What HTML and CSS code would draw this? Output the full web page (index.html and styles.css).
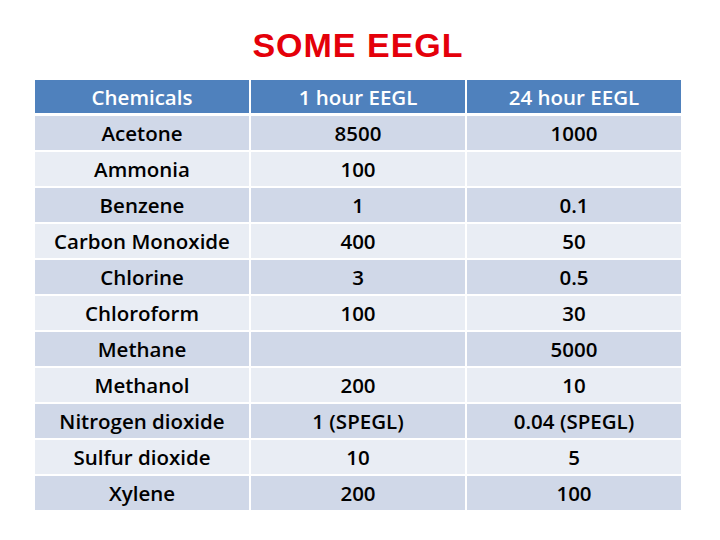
FILE: index.html
```html
<!DOCTYPE html>
<html>
<head>
<meta charset="utf-8">
<link rel="stylesheet" href="styles.css">
</head>
<body>
<div class="page">
  <h1 class="title">SOME EEGL</h1>
  <div class="table">
    <div class="row head"><div class="cell">Chemicals</div><div class="cell">1 hour EEGL</div><div class="cell">24 hour EEGL</div></div>
    <div class="row odd"><div class="cell">Acetone</div><div class="cell">8500</div><div class="cell">1000</div></div>
    <div class="row even"><div class="cell">Ammonia</div><div class="cell">100</div><div class="cell"></div></div>
    <div class="row odd"><div class="cell">Benzene</div><div class="cell">1</div><div class="cell">0.1</div></div>
    <div class="row even"><div class="cell">Carbon Monoxide</div><div class="cell">400</div><div class="cell">50</div></div>
    <div class="row odd"><div class="cell">Chlorine</div><div class="cell">3</div><div class="cell">0.5</div></div>
    <div class="row even"><div class="cell">Chloroform</div><div class="cell">100</div><div class="cell">30</div></div>
    <div class="row odd"><div class="cell">Methane</div><div class="cell"></div><div class="cell">5000</div></div>
    <div class="row even"><div class="cell">Methanol</div><div class="cell">200</div><div class="cell">10</div></div>
    <div class="row odd"><div class="cell">Nitrogen dioxide</div><div class="cell">1 (SPEGL)</div><div class="cell">0.04 (SPEGL)</div></div>
    <div class="row even"><div class="cell">Sulfur dioxide</div><div class="cell">10</div><div class="cell">5</div></div>
    <div class="row odd"><div class="cell">Xylene</div><div class="cell">200</div><div class="cell">100</div></div>
  </div>
</div>
</body>
</html>
```
FILE: styles.css
```css
html, body {
  margin: 0;
  padding: 0;
  background: #ffffff;
}
.page {
  width: 720px;
  height: 540px;
  padding-left: 35px;
  box-sizing: border-box;
  display: flex;
  flex-direction: column;
  align-items: flex-start;
}
.title {
  margin: 28px 0 0 0;
  width: 646px;
  height: 34px;
  text-align: center;
  font-family: "Liberation Sans", Arial, sans-serif;
  font-size: 34px;
  line-height: 34px;
  font-weight: bold;
  letter-spacing: 1px;
  color: #e4000a;
}
.table {
  margin-top: 18px;
  width: 646px;
  display: flex;
  flex-direction: column;
  gap: 2px;
}
.row {
  display: grid;
  grid-template-columns: 214px 214px 214px;
  column-gap: 2px;
  height: 34px;
}
.row.head {
  height: 33px;
  margin-bottom: 1px;
}
.cell {
  display: flex;
  align-items: center;
  justify-content: center;
  font-family: "Open Sans", sans-serif;
  font-size: 20.5px;
  font-weight: 600;
  color: #000000;
}
.head .cell {
  background: #4f81bd;
  color: #ffffff;
}
.odd .cell {
  background: #d0d8e8;
}
.even .cell {
  background: #e9edf4;
}
```
